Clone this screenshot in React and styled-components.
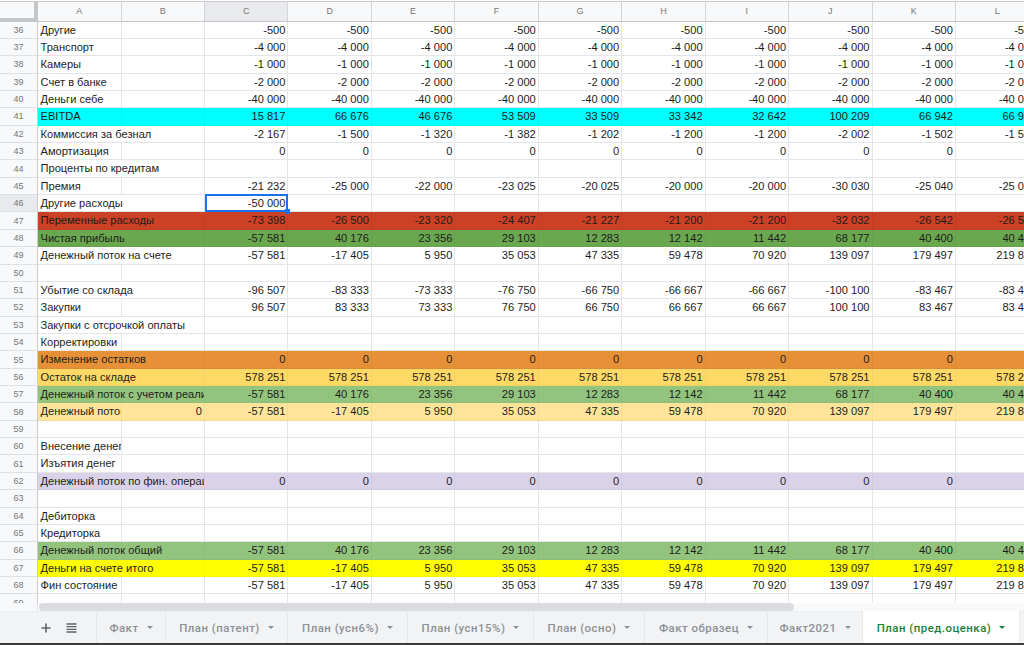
import React from 'react';
import styled, { createGlobalStyle } from 'styled-components';

const Global = createGlobalStyle`
  html, body { margin: 0; padding: 0; background: #fff; overflow: hidden; }
  #root { width: 1024px; height: 645px; overflow: hidden; }
`;

const Page = styled.div`
  width: 1024px;
  height: 645px;
  display: flex;
  flex-direction: column;
  overflow: hidden;
  font-family: "Liberation Sans", Arial, sans-serif;
  background: #fff;
`;
const Sheet = styled.div`
  height: 603px;
  flex: none;
  overflow: hidden;
  padding-top: 1px;
  box-sizing: border-box;
`;
const GRID = '38px 83.5px 83.5px repeat(10, 83.45px)';
const HeaderRow = styled.div`
  display: grid;
  grid-template-columns: ${GRID};
  height: 20.5px;
  border-top: 1px solid #c8cacc;
  box-sizing: border-box;
  width: 1110px;
`;
const Corner = styled.div`
  background: #f8f9fa;
  border-right: 4px solid #c4c6c8;
  border-bottom: 4px solid #c4c6c8;
  box-sizing: border-box;
`;
const ColHead = styled.div`
  background: ${p => (p.$active ? '#e8eaed' : '#f8f9fa')};
  border-right: 1px solid #d4d5d7;
  border-bottom: 1px solid #c4c6c8;
  box-sizing: border-box;
  color: #777;
  font-size: 9px;
  display: flex;
  align-items: center;
  justify-content: center;
`;
const Row = styled.div`
  display: grid;
  grid-template-columns: ${GRID};
  height: 17.37px;
  width: 1110px;
  background: ${p => p.$bg || '#fff'};
`;
const RowHead = styled.div`
  background: ${p => (p.$active ? '#e8eaed' : '#f8f9fa')};
  border-right: 1px solid #c9cbcd;
  border-bottom: 1px solid #dfe0e2;
  box-sizing: border-box;
  color: #777;
  font-size: 9px;
  display: flex;
  align-items: center;
  justify-content: center;
`;
const Cell = styled.div`
  position: relative;
  min-width: 0;
  box-sizing: border-box;
  grid-column: span ${p => p.$span || 1};
  border-right: 1px solid ${p => (p.$tint ? 'rgba(0,0,0,0.035)' : '#e4e5e6')};
  border-bottom: 1px solid ${p => (p.$tint ? 'rgba(0,0,0,0.035)' : '#e4e5e6')};
  font-size: 11.1px;
  line-height: 16.4px;
  color: #1d1d1d;
  padding: 0 2px 0 2.5px;
  white-space: nowrap;
  text-align: ${p => (p.$right ? 'right' : 'left')};
  overflow: hidden;
`;
const Selected = styled(Cell)`
  overflow: visible;
  border: 2px solid #1a73e8;
  margin-top: -1px;
  height: 18.3px;
  line-height: 15.4px;
  padding: 0 1px 0 2px;
  z-index: 3;
  &::after {
    content: '';
    position: absolute;
    right: -4px;
    bottom: -4px;
    width: 5px;
    height: 5px;
    background: #1a73e8;
  }
`;
const ScrollTrack = styled.div`
  height: 8px;
  flex: none;
  display: flex;
  background: #f8f9fa;
`;
const ScrollGutter = styled.div`
  width: 38px;
  flex: none;
  border-right: 1px solid #e0e1e3;
  box-sizing: border-box;
`;
const ScrollThumb = styled.div`
  width: 755px;
  height: 8px;
  margin-left: 1px;
  border-radius: 4px;
  background: #dadce0;
`;
const TabBar = styled.div`
  height: 32px;
  flex: none;
  display: flex;
  background: #f1f3f4;
  border-top: 1px solid #eceef0;
  box-sizing: border-box;
  font-family: Roboto, "Liberation Sans", sans-serif;
`;
const Tools = styled.div`
  width: 97px;
  flex: none;
  display: flex;
  align-items: center;
  padding-left: 41px;
  gap: 15px;
  box-sizing: border-box;
  border-right: 1px solid #e6e8ea;
`;
const Tab = styled.div`
  height: ${p => (p.$active ? '33px' : 'auto')};
  margin-top: ${p => (p.$active ? '-1px' : '0')};
  width: ${p => p.$w}px;
  flex: none;
  display: flex;
  align-items: center;
  justify-content: center;
  gap: 8px;
  box-sizing: border-box;
  border-right: 1px solid #e6e8ea;
  background: ${p => (p.$active ? '#fff' : 'transparent')};
  color: ${p => (p.$active ? '#188038' : '#8c9196')};
  font-size: 11.4px;
  font-weight: 500;
  letter-spacing: 0.5px;
  white-space: nowrap;
`;
const Caret = styled.span`
  width: 0;
  height: 0;
  border-left: 3.5px solid transparent;
  border-right: 3.5px solid transparent;
  border-top: 3.5px solid currentColor;
`;
const BottomEdge = styled.div`
  height: 2px;
  flex: none;
  background: #3b3b3b;
`;

const cols = ['A','B','C','D','E','F','G','H','I','J','K','L'];
const rep = (v) => Array(10).fill(v);
const zero = rep('0');
const net = ['-57 581','40 176','23 356','29 103','12 283','12 142','11 442','68 177','40 400','40 400'];
const cash = ['-57 581','-17 405','5 950','35 053','47 335','59 478','70 920','139 097','179 497','219 897'];

const rows = [
  { num: 36, label: 'Другие', values: rep('-500') },
  { num: 37, label: 'Транспорт', values: rep('-4 000') },
  { num: 38, label: 'Камеры', values: rep('-1 000') },
  { num: 39, label: 'Счет в банке', values: rep('-2 000') },
  { num: 40, label: 'Деньги себе', values: rep('-40 000') },
  { num: 41, label: 'EBITDA', bg: '#00ffff', values: ['15 817','66 676','46 676','53 509','33 509','33 342','32 642','100 209','66 942','66 942'] },
  { num: 42, label: 'Коммиссия за безнал', values: ['-2 167','-1 500','-1 320','-1 382','-1 202','-1 200','-1 200','-2 002','-1 502','-1 502'] },
  { num: 43, label: 'Амортизация', values: zero },
  { num: 44, label: 'Проценты по кредитам' },
  { num: 45, label: 'Премия', values: ['-21 232','-25 000','-22 000','-23 025','-20 025','-20 000','-20 000','-30 030','-25 040','-25 040'] },
  { num: 46, label: 'Другие расходы', values: ['-50 000'] },
  { num: 47, label: 'Переменные расходы', bg: '#cc4125', values: ['-73 398','-26 500','-23 320','-24 407','-21 227','-21 200','-21 200','-32 032','-26 542','-26 542'] },
  { num: 48, label: 'Чистая прибыль', bg: '#6aa84f', values: net },
  { num: 49, label: 'Денежный поток на счете', values: cash },
  { num: 50, label: '' },
  { num: 51, label: 'Убытие со склада', values: ['-96 507','-83 333','-73 333','-76 750','-66 750','-66 667','-66 667','-100 100','-83 467','-83 467'] },
  { num: 52, label: 'Закупки', values: ['96 507','83 333','73 333','76 750','66 750','66 667','66 667','100 100','83 467','83 467'] },
  { num: 53, label: 'Закупки с отсрочкой оплаты' },
  { num: 54, label: 'Корректировки' },
  { num: 55, label: 'Изменение остатков', bg: '#e69138', values: zero },
  { num: 56, label: 'Остаток на складе', bg: '#ffd966', values: rep('578 251') },
  { num: 57, label: 'Денежный поток с учетом реализации', bg: '#93c47d', values: net },
  { num: 58, label: 'Денежный поток', bg: '#ffe599', values: cash, b: '0' },
  { num: 59, label: '' },
  { num: 60, label: 'Внесение денег на счет', b: '' },
  { num: 61, label: 'Изъятия денег' },
  { num: 62, label: 'Денежный поток по фин. операциям', bg: '#d9d2e9', values: zero },
  { num: 63, label: '' },
  { num: 64, label: 'Дебиторка' },
  { num: 65, label: 'Кредиторка' },
  { num: 66, label: 'Денежный поток общий', bg: '#93c47d', values: net },
  { num: 67, label: 'Деньги на счете итого', bg: '#ffff00', values: cash },
  { num: 68, label: 'Фин состояние', values: cash },
  { num: 69, label: '' },
];

const tabs = [
  ['Факт', 69], ['План (патент)', 122], ['План (усн6%)', 120], ['План (усн15%)', 126],
  ['План (осно)', 111], ['Факт образец', 123], ['Факт2021', 95],
];

function SheetRow({ num, label, values, bg, b }) {
  const wide = b === undefined && label.length >= 14;
  return (
    <Row $bg={bg}>
      <RowHead $active={num === 46}>{num}</RowHead>
      <Cell $tint={!!bg} $span={wide ? 2 : 1}>{label}</Cell>
      {!wide && <Cell $tint={!!bg} $right>{b}</Cell>}
      {Array.from({ length: 10 }).map((_, i) => {
        const v = values ? values[i] : '';
        if (num === 46 && i === 0) return <Selected key={i} $right>{v}</Selected>;
        return <Cell key={i} $tint={!!bg} $right>{v}</Cell>;
      })}
    </Row>
  );
}

export default function App() {
  return (
    <Page>
      <Global />
      <Sheet>
        <HeaderRow>
          <Corner />
          {cols.map(c => <ColHead key={c} $active={c === 'C'}>{c}</ColHead>)}
        </HeaderRow>
        {rows.map(r => <SheetRow key={r.num} {...r} />)}
      </Sheet>
      <ScrollTrack><ScrollGutter /><ScrollThumb /></ScrollTrack>
      <TabBar>
        <Tools>
          <svg width="10" height="10" viewBox="0 0 10 10" aria-hidden="true">
            <path d="M5 .5v9M.5 5h9" stroke="#5f6368" strokeWidth="1.6" fill="none" />
          </svg>
          <svg width="11" height="10" viewBox="0 0 11 10" aria-hidden="true">
            <path d="M.5 1h10M.5 3.7h10M.5 6.3h10M.5 9h10" stroke="#5f6368" strokeWidth="1.3" fill="none" />
          </svg>
        </Tools>
        {tabs.map(([n, w]) => <Tab key={n} $w={w}>{n}<Caret /></Tab>)}
        <Tab $w={157} $active>План (пред.оценка)<Caret /></Tab>
      </TabBar>
      <BottomEdge />
    </Page>
  );
}
